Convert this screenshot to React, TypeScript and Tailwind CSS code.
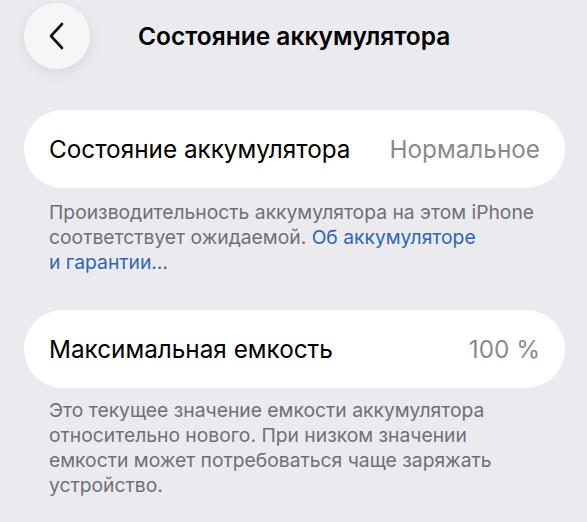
export default function App() {
  return (
    <div
      className="w-[587px] h-[522px] overflow-hidden bg-[#ebeaef] text-black"
      style={{ fontFamily: "Inter, 'Noto Sans', sans-serif" }}
    >
      {/* Header */}
      <div className="flex items-center h-[70px] pl-[24px] pt-[2px]">
        <button className="w-[66px] h-[66px] rounded-full bg-[#f6f6f8] shadow-[0_4px_14px_rgba(0,0,0,0.08)] flex items-center justify-center">
          <svg width="20" height="30" viewBox="0 0 20 30" fill="none">
            <path
              d="M15 3 L4 15 L15 27"
              stroke="#111"
              strokeWidth="2.6"
              strokeLinecap="round"
              strokeLinejoin="round"
            />
          </svg>
        </button>
        <h1 className="ml-[48px] text-[24.5px] font-semibold">
          Состояние аккумулятора
        </h1>
      </div>

      <div className="pl-[24px] pr-[22px] pt-[40px]">
        {/* Card 1 */}
        <div className="h-[78px] rounded-full bg-white flex items-center justify-between pl-[25px] pr-[25px] text-[24.3px]">
          <span>Состояние аккумулятора</span>
          <span className="text-[#8a8a8e]">Нормальное</span>
        </div>
        <p className="px-[25px] pt-[12px] text-[19.3px] leading-[25px] text-[#6f6f74]">
          Производительность аккумулятора на этом iPhone соответствует
          ожидаемой. <span className="text-[#2d65b5]">Об аккумуляторе</span>
          <br />
          <span className="text-[#2d65b5]">и гарантии…</span>
        </p>

        {/* Card 2 */}
        <div className="mt-[35px] h-[78px] rounded-full bg-white flex items-center justify-between pl-[25px] pr-[25px] text-[24.3px]">
          <span>Максимальная емкость</span>
          <span className="text-[#8a8a8e]">100 %</span>
        </div>
        <p className="px-[25px] pt-[10px] text-[19.3px] leading-[25px] text-[#6f6f74]">
          Это текущее значение емкости аккумулятора относительно нового. При
          низком значении емкости может потребоваться чаще заряжать
          устройство.
        </p>
      </div>
    </div>
  );
}
